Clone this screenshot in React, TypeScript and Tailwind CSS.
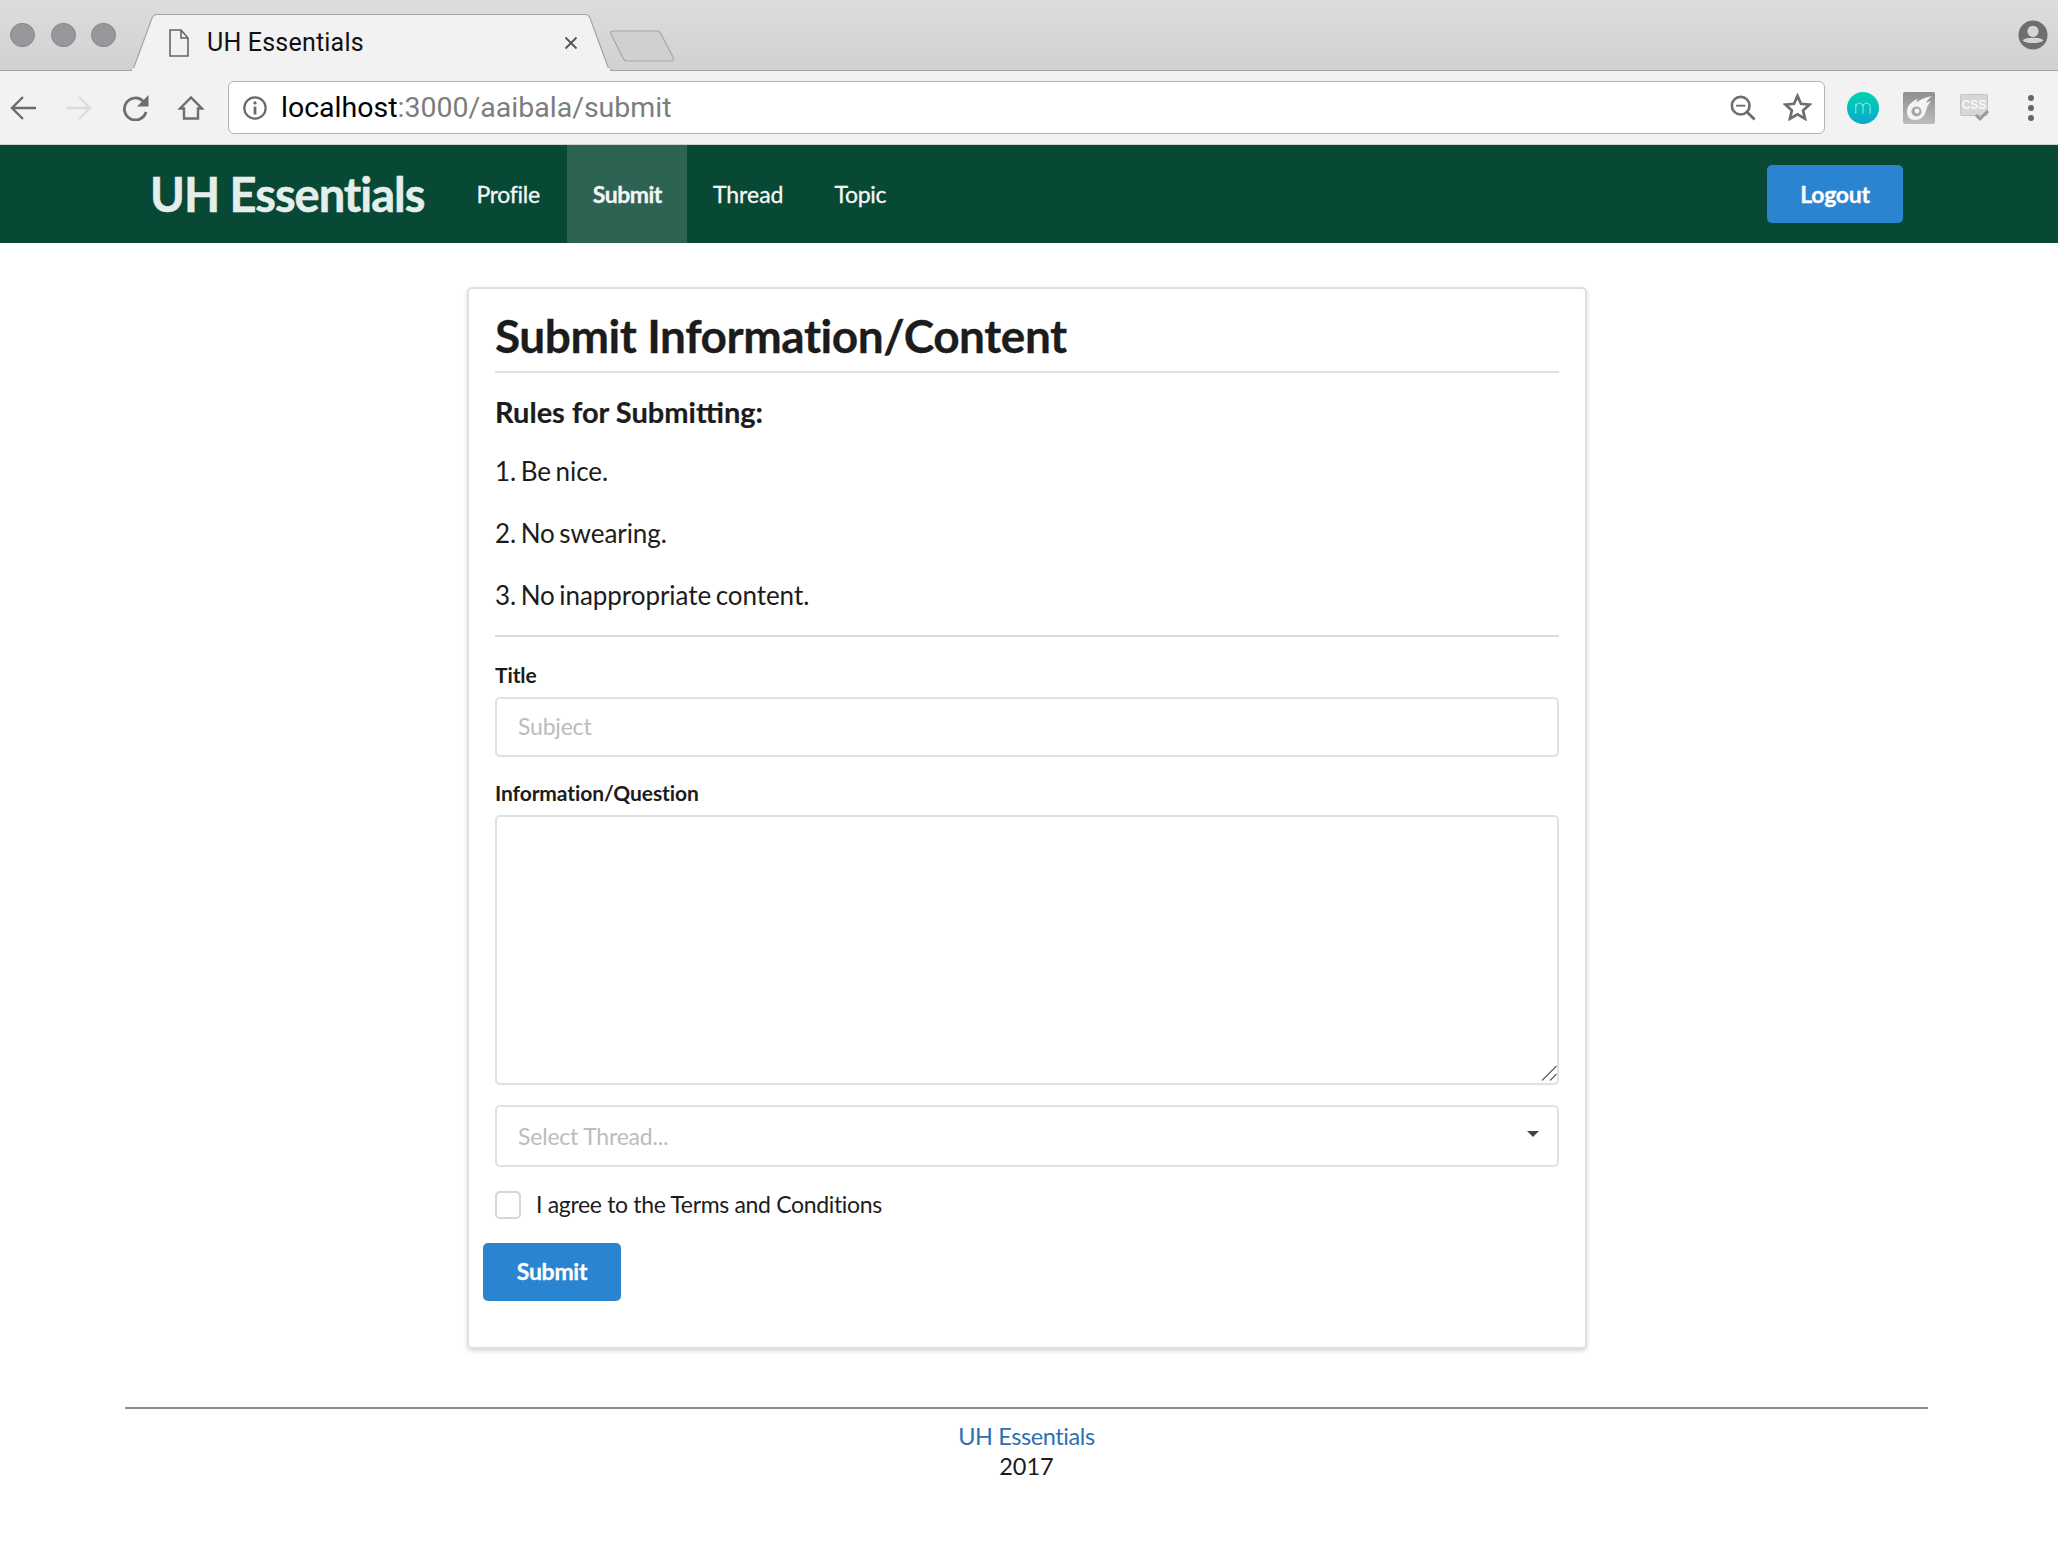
import React from "react";

const ACCENT = "bg-[#2a84d0]";

function BrowserChrome() {
  return (
    <div className="font-['Roboto',sans-serif]">
      <div className="h-[71px] flex items-start bg-gradient-to-b from-[#dcdddd] to-[#d0d1d1] border-b border-[#a4a4a4]">
        <div className="flex gap-[15.5px] ml-[10px] mt-[23px]">
          {[0, 1, 2].map((i) => (
            <div key={i} className="w-[25px] h-[24px] rounded-full bg-[#98979c] border border-[#88888c]" />
          ))}
        </div>
        <div className="relative ml-[13px] mt-[14px] w-[484px] h-[57px]">
          <svg className="absolute inset-0" width="484" height="58" viewBox="0 0 484 58" fill="none">
            <path d="M0 56.5 H1 C3 56.5 4 55.5 5 53 L23 4 C24 2 25 0.5 28 0.5 H456 C459 0.5 460 2 461 4 L479 53 C480 55.5 481 56.5 483 56.5 H484" fill="#f2f2f2" stroke="#a4a4a4" strokeWidth="1.2" />
            <rect x="3" y="54" width="478" height="4" fill="#f2f2f2" />
          </svg>
          <div className="relative flex items-center h-[57px] pl-[40px] pr-[35px]">
            <svg width="20" height="28" viewBox="0 0 20 28" fill="none" stroke="#666" strokeWidth="1.6">
              <path d="M1 1 H12 L19 9 V27 H1 Z M12 1 V9 H19" />
            </svg>
            <span className="ml-[18px] text-[25px] leading-none text-[#111] tracking-[0.2px] -mt-[1px]">UH Essentials</span>
            <svg className="ml-auto" width="14" height="14" viewBox="0 0 14 14" stroke="#555" strokeWidth="1.8">
              <path d="M1.5 1.5 L12.5 12.5 M12.5 1.5 L1.5 12.5" />
            </svg>
          </div>
        </div>
        <svg className="-ml-[3px] mt-[30px]" width="65" height="32" viewBox="0 0 65 32" fill="#d0d0d0" stroke="#a8a8a8" strokeWidth="1.2">
          <path d="M3 1 H47 C49 1 50 2 51 4 L63 27 C64 29.5 63 31 61 31 H17 C15 31 14 30 13 28 L1 4 C0 2 1 1 3 1 Z" />
        </svg>
        <svg className="ml-auto mr-[10px] mt-[20px]" width="30" height="30" viewBox="0 0 32 32">
          <circle cx="16" cy="16" r="15.5" fill="#6e6e6e" />
          <circle cx="16" cy="12" r="6" fill="#d4d5d5" />
          <path d="M5 21.5 C8 18 24 18 27 21.5 C25 25.5 7 25.5 5 21.5 Z" fill="#d4d5d5" />
        </svg>
      </div>
      <div className="h-[74px] flex items-center bg-[#f2f2f2] border-b border-[#cfcfcf]">
        <svg className="ml-[10px]" width="26" height="24" viewBox="0 0 26 24" fill="none" stroke="#6b6b6b" strokeWidth="2.4">
          <path d="M26 12 H2.5 M13 1 L2 12 L13 23" />
        </svg>
        <svg className="ml-[30px]" width="26" height="24" viewBox="0 0 26 24" fill="none" stroke="#dcdcdc" strokeWidth="2.4">
          <path d="M0 12 H23.5 M13 1 L24 12 L13 23" />
        </svg>
        <svg className="ml-[30px]" width="27" height="26" viewBox="0 0 27 26" fill="none" stroke="#6e6e6e" strokeWidth="2.8">
          <path d="M24 17 A11 11 0 1 1 21 6" />
          <path d="M26.5 0 V11.5 H15 Z" fill="#6e6e6e" stroke="none" />
        </svg>
        <svg className="ml-[29px]" width="26" height="24" viewBox="0 0 26 24" fill="none" stroke="#6e6e6e" strokeWidth="2.4">
          <path d="M2 12.5 L13 1.5 L24 12.5 H20 V22.5 H6 V12.5 Z" />
        </svg>
        <div className="ml-[24px] w-[1597px] h-[53px] rounded-[6px] bg-white border border-[#b5b5b5] flex items-center pl-[13px] pr-[12px]">
          <svg width="26" height="26" viewBox="0 0 28 28" fill="none" stroke="#6a6a6a" strokeWidth="2.4">
            <circle cx="14" cy="14" r="11.5" />
            <path d="M14 12.5 V21" strokeWidth="3" />
            <circle cx="14" cy="8.5" r="1.8" fill="#6a6a6a" stroke="none" />
          </svg>
          <span className="ml-[13px] mt-[2px] text-[28.5px] leading-none text-black">localhost<span className="text-[#7d7d7d]">:3000/aaibala/submit</span></span>
          <svg className="ml-auto" width="26" height="26" viewBox="0 0 28 28" fill="none" stroke="#6e6e6e" strokeWidth="2.8">
            <circle cx="11.5" cy="11.5" r="9.5" />
            <path d="M6.5 11.5 H16.5" strokeWidth="2" />
            <path d="M18 18 L26.5 26.5" strokeWidth="3" />
          </svg>
          <svg className="ml-[27px] -mt-[1px]" width="29" height="28" viewBox="0 0 30 29" fill="none" stroke="#6e6e6e" strokeWidth="2.8">
            <path d="M15 3 L18.6 11.2 L27.5 12 L20.8 18 L22.8 26.6 L15 22 L7.2 26.6 L9.2 18 L2.5 12 L11.4 11.2 Z" />
          </svg>
        </div>
        <div className="w-[32px] h-[32px] ml-[22px] rounded-full bg-gradient-to-b from-[#06d3b0] to-[#0aa9cb] flex items-center justify-center">
          <svg width="18" height="13" viewBox="0 0 20 14" fill="none" stroke="#9fe8e4" strokeWidth="1.1">
            <path d="M2 14 V3 M2 6 C2 1 10 1 10 6 V14 M10 6 C10 1 18 1 18 6 V14" />
          </svg>
        </div>
        <div className="w-[32px] h-[32px] ml-[24px] rounded-[2px] bg-gradient-to-b from-[#8e8e8e] to-[#bcbcbc] flex items-center justify-center">
          <svg width="30" height="30" viewBox="0 0 30 30">
            <path d="M3 19 C3 12 8 8 14 6 C13 7.5 12.5 8.5 12.5 9.5 C16 6.5 21 4.5 28 3 C25 5.5 23 7.5 22 9.5 C24 9 25.5 8.5 27 8.5 C24 11 23 14 22 18 C20.5 24 16 27 11 27 C6 27 3 24 3 19 Z" fill="#f4f4f4" />
            <circle cx="12.5" cy="18.5" r="5" fill="#a6a6a6" />
            <circle cx="13" cy="18" r="2.4" fill="#f4f4f4" />
          </svg>
        </div>
        <div className="relative w-[28px] h-[22px] ml-[25px] -mt-[6px] rounded-[2px] bg-[#d6d6d6] border border-[#c4c4c4] flex items-center justify-center">
          <span className="font-['Liberation_Sans',sans-serif] text-[12px] leading-none font-bold text-[#f8f8f8]">CSS</span>
          <svg className="absolute -right-[3px] -bottom-[7px]" width="16" height="13" viewBox="0 0 16 13" fill="none" stroke="#9a9a9a" strokeWidth="3">
            <path d="M2 6 L6 10 L14 2" />
          </svg>
        </div>
        <div className="ml-[40px] flex flex-col gap-[4px]">
          {[0, 1, 2].map((i) => (
            <div key={i} className="w-[6px] h-[6px] rounded-full bg-[#666]" />
          ))}
        </div>
      </div>
    </div>
  );
}

function Navbar() {
  return (
    <nav className="h-[98px] bg-[#084936] flex items-stretch pl-[150px] pr-[155px]">
      <div className="flex items-center text-[47px] font-bold text-[#e6eeec] tracking-[-1px] leading-none [-webkit-text-stroke:0.5px_#e6eeec]">UH Essentials</div>
      <div className="flex ml-[27px] text-[23px] text-[#f4f7f6] [-webkit-text-stroke:0.3px_#f4f7f6]">
        <div className="pl-[25px] pr-[27px] flex items-center tracking-[-0.3px]">Profile</div>
        <div className="pl-[26px] pr-[25px] flex items-center bg-[#2d6352] font-bold tracking-[-0.5px]">Submit</div>
        <div className="pl-[26px] pr-[25px] flex items-center">Thread</div>
        <div className="px-[26px] flex items-center tracking-[-0.3px]">Topic</div>
      </div>
      <div className={`ml-auto self-center w-[136px] h-[58px] rounded-[5px] ${ACCENT} flex items-center justify-center text-white font-bold text-[23px] tracking-[-0.3px] [-webkit-text-stroke:0.3px_white]`}>
        Logout
      </div>
    </nav>
  );
}

function SubmitCard() {
  return (
    <div className="w-[1120px] h-[1062px] ml-[467px] mt-[44px] rounded-[5px] border-2 border-[#e0e0e0] bg-white shadow-[0_2px_4px_rgba(0,0,0,0.16)] px-[26px] pt-[19.5px]">
      <h1 className="text-[46px] font-bold leading-[54px] text-[#1c1c1c] tracking-[-0.45px] pb-[8px] border-b-2 border-[#e0e0e0] [-webkit-text-stroke:0.3px_#1c1c1c]">Submit Information/Content</h1>
      <h2 className="text-[29px] font-bold leading-[36px] text-[#1c1c1c] mt-[21.5px] [-webkit-text-stroke:0.2px_#1c1c1c]">Rules for Submitting:</h2>
      <div className="text-[26px] leading-[36px] text-[#1c1c1c] tracking-[-0.06px] [word-spacing:-2px] mt-[23px] flex flex-col gap-[26px]">
        <p>1. Be nice.</p>
        <p>2. No swearing.</p>
        <p>3. No inappropriate content.</p>
      </div>
      <div className="border-b-2 border-[#dcdcdc] mt-[22px]" />
      <div className="text-[21px] font-bold leading-[26px] text-[#1c1c1c] mt-[24.5px] tracking-[-0.1px]">Title</div>
      <input
        placeholder="Subject"
        className="block w-full h-[60px] mt-[9px] pb-[2px] rounded-[5px] border-2 border-[#e0e0e0] px-[21px] text-[23px] tracking-[-0.2px] outline-none placeholder:text-[#bcbcbc]"
      />
      <div className="text-[21px] font-bold leading-[26px] text-[#1c1c1c] mt-[23px] tracking-[-0.1px]">Information/Question</div>
      <div className="relative mt-[9px]">
        <textarea className="block w-full h-[270px] rounded-[5px] border-2 border-[#e0e0e0] outline-none resize-none" />
        <svg className="absolute right-[2px] bottom-[4px]" width="16" height="16" viewBox="0 0 16 16" stroke="#666" strokeWidth="1.3">
          <path d="M1 15.5 L15.5 1 M9 15.5 L15.5 9" />
        </svg>
      </div>
      <div className="relative w-full h-[62px] mt-[20.5px] rounded-[5px] border-2 border-[#e0e0e0] flex items-center px-[21px] text-[23px] text-[#bcbcbc] tracking-[-0.2px]">
        Select Thread...
        <div className="absolute right-[18px] top-[24px] w-0 h-0 border-l-[6px] border-r-[6px] border-t-[6px] border-l-transparent border-r-transparent border-t-[#444]" />
      </div>
      <div className="flex items-center mt-[24px] h-[28px]">
        <div className="w-[26px] h-[28px] rounded-[5px] border-2 border-[#d6d6d6]" />
        <span className="ml-[15px] -mt-[1px] text-[23px] text-[#1c1c1c] tracking-[-0.33px]">I agree to the Terms and Conditions</span>
      </div>
      <div className={`-ml-[12px] mt-[23.5px] w-[138px] h-[58px] rounded-[5px] ${ACCENT} flex items-center justify-center text-white font-bold text-[23px] tracking-[-0.3px] [-webkit-text-stroke:0.3px_white]`}>
        Submit
      </div>
    </div>
  );
}

export default function App() {
  return (
    <div className="w-[2058px] h-[1542px] bg-white overflow-hidden font-['Lato',sans-serif]">
      <BrowserChrome />
      <Navbar />
      <SubmitCard />
      <footer className="mt-[58px] ml-[125px] w-[1803px] border-t-2 border-[#8e8e8e] pt-[12px] text-center text-[23.5px] leading-[30px]">
        <div className="text-[#2f6fb2] tracking-[-0.4px]">UH Essentials</div>
        <div className="text-[#1c1c1c]">2017</div>
      </footer>
    </div>
  );
}
